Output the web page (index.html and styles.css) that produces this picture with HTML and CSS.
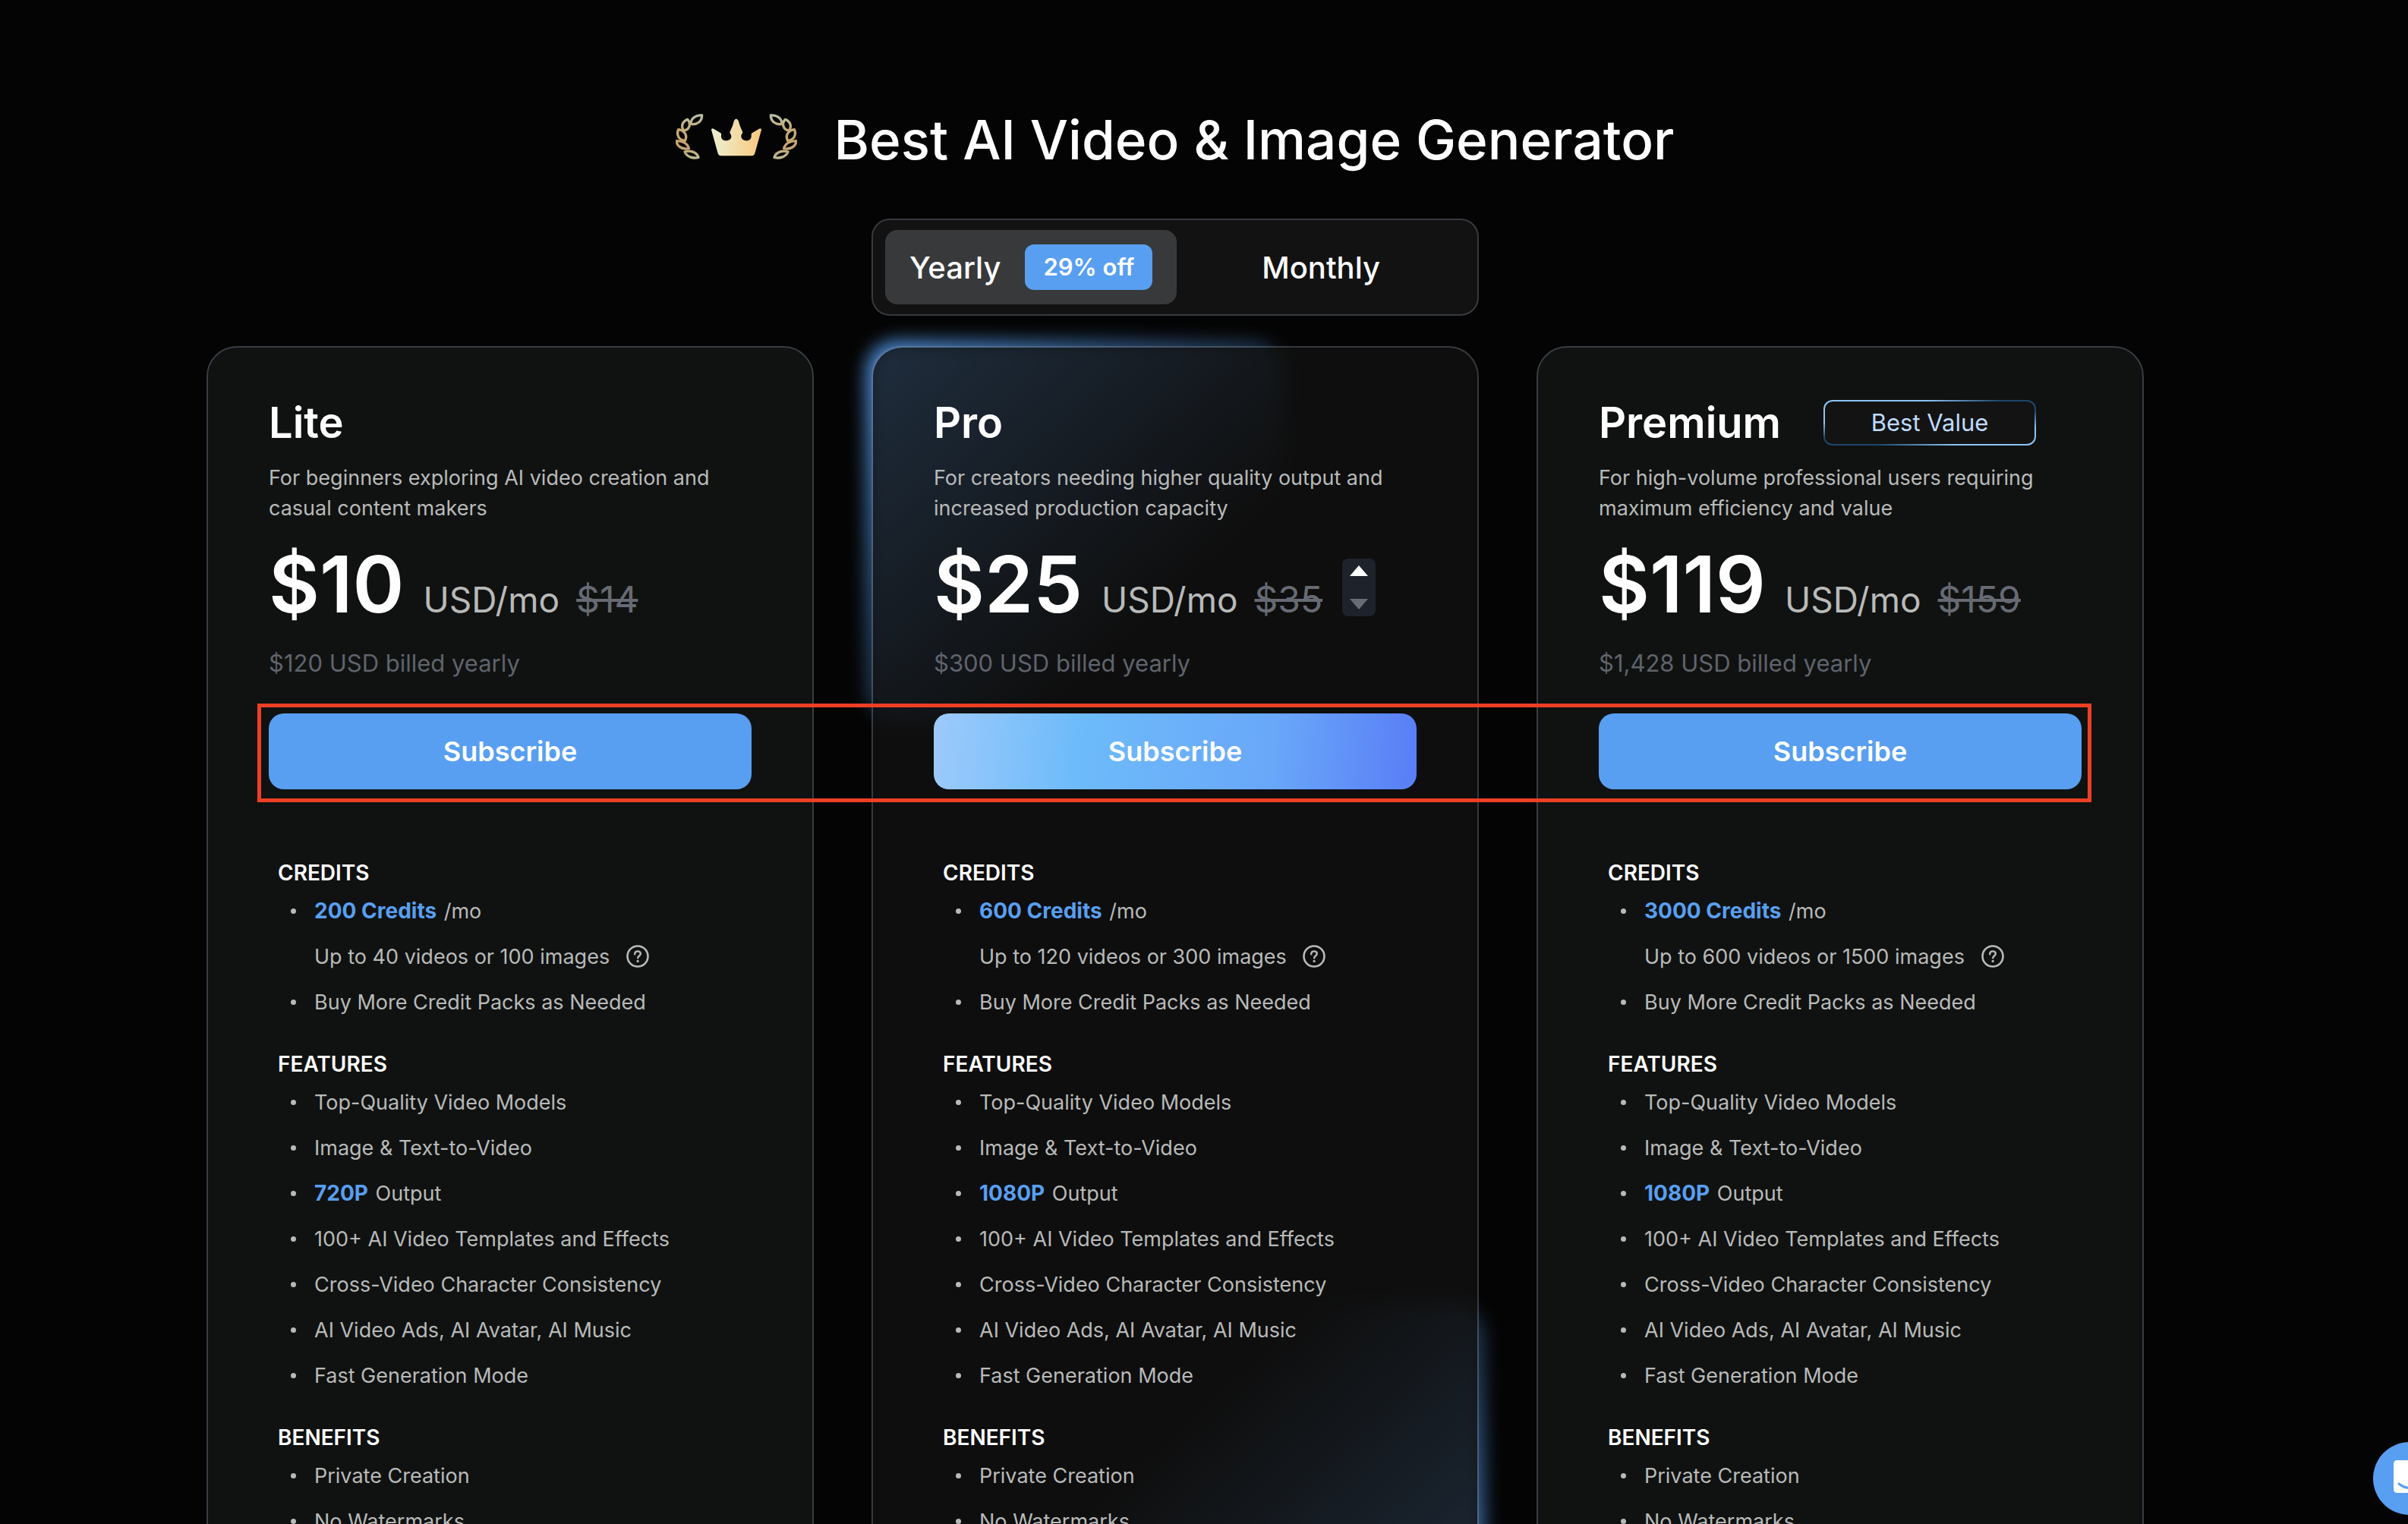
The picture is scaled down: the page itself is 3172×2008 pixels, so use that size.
FILE: index.html
```html
<!DOCTYPE html>
<html lang="en">
<head>
  <meta charset="UTF-8">
  <meta name="viewport" content="width=device-width, initial-scale=1.0">
  <title>Best AI Video &amp; Image Generator</title>
  <link rel="stylesheet" href="styles.css">
</head>
<body>
  <!-- shared icons -->
  <svg class="defs" width="0" height="0" aria-hidden="true">
    <defs>
      <linearGradient id="gold" x1="0" y1="0" x2="1" y2="0">
        <stop offset="0" stop-color="#ebf0d0"/>
        <stop offset="1" stop-color="#fac97e"/>
      </linearGradient>
      <linearGradient id="laurel" gradientUnits="userSpaceOnUse" x1="0" y1="60" x2="0" y2="235">
        <stop offset="0" stop-color="#b9c2aa"/>
        <stop offset="0.3" stop-color="#c4ac7a"/>
        <stop offset="0.7" stop-color="#c9a36b"/>
        <stop offset="1" stop-color="#bdb995"/>
      </linearGradient>
    </defs>
    <symbol id="help" viewBox="0 0 30 30">
      <circle cx="15" cy="15" r="13.5" fill="none" stroke="currentColor" stroke-width="2.6"/>
      <path d="M11.2 12.2C11.2 9.8 12.8 8.4 15 8.4c2.2 0 3.8 1.4 3.8 3.4 0 2.6-3.6 2.9-3.6 5.4" fill="none" stroke="currentColor" stroke-width="2.4" stroke-linecap="round"/>
      <circle cx="15.1" cy="21.4" r="1.6" fill="currentColor"/>
    </symbol>
  </svg>

  <main class="page">
    <header class="hero">
      <svg class="crown" viewBox="90 58 480 180" aria-hidden="true">
        <g id="leaves" fill="none" stroke="url(#laurel)" stroke-width="10" stroke-linejoin="round">
          <path d="M194 64C176 61 150 72 150 98C174 103 194 88 194 64Z"/>
          <path d="M137 80C118 88 109 106 122 124C143 121 154 98 137 80Z"/>
          <path d="M101 120C92 140 102 162 127 164C138 144 126 124 101 120Z"/>
          <path d="M94 165C94 187 117 200 142 195C138 175 117 165 94 165Z"/>
          <path d="M126 208C134 228 158 236 180 230C174 209 147 201 126 208Z"/>
        </g>
        <use href="#leaves" transform="translate(660 0) scale(-1 1)"/>
        <path d="M231 121Q232 114 240 117L268 134Q272 137 270 144C269 158 279 164 290 164C302 164 311 157 310 146Q309 139 305 135Q303 131 306 126Q316 106 321 85Q329 70 338 85Q343 106 353 126Q357 131 353 136Q349 140 349 146C349 157 358 164 369 164C381 164 390 157 389 144Q388 137 392 134L420 117Q429 114 429 121L403 214Q400 224 390 224H270Q260 224 257 214Z" fill="url(#gold)"/>
      </svg>
      <h1 class="hero-title">Best AI Video &amp; Image Generator</h1>
    </header>

    <div class="billing">
      <button class="billing-tab selected" type="button">Yearly <span class="discount">29% off</span></button>
      <button class="billing-tab" type="button">Monthly</button>
    </div>

    <div class="plans">
      <section class="plan">
        <div class="plan-head">
          <h2 class="plan-name">Lite</h2>
        </div>
        <p class="plan-desc">For beginners exploring AI video creation and<br>casual content makers</p>
        <div class="price">
          <span class="amount">$10</span>
          <span class="unit">USD/mo</span>
          <del class="old">$14</del>
        </div>
        <p class="billed">$120 USD billed yearly</p>
        <button class="subscribe" type="button">Subscribe</button>
        <div class="details">
          <h3>CREDITS</h3>
          <ul>
            <li><b>200 Credits</b> /mo</li>
            <li class="plain">Up to 40 videos or 100 images <button class="help" type="button" aria-label="More about credits"><svg><use href="#help"/></svg></button></li>
            <li>Buy More Credit Packs as Needed</li>
          </ul>
          <h3>FEATURES</h3>
          <ul>
            <li>Top-Quality Video Models</li>
            <li>Image &amp; Text-to-Video</li>
            <li><b>720P</b> Output</li>
            <li>100+ AI Video Templates and Effects</li>
            <li>Cross-Video Character Consistency</li>
            <li>AI Video Ads, AI Avatar, AI Music</li>
            <li>Fast Generation Mode</li>
          </ul>
          <h3>BENEFITS</h3>
          <ul>
            <li>Private Creation</li>
            <li>No Watermarks</li>
          </ul>
        </div>
      </section>

      <section class="plan plan-pro">
        <div class="plan-head">
          <h2 class="plan-name">Pro</h2>
        </div>
        <p class="plan-desc">For creators needing higher quality output and<br>increased production capacity</p>
        <div class="price">
          <span class="amount">$25</span>
          <span class="unit">USD/mo</span>
          <del class="old">$35</del>
          <div class="stepper">
            <button type="button" aria-label="Next tier"><svg viewBox="0 0 24 14"><path d="M12 0L24 14H0Z" fill="#fff"/></svg></button>
            <button type="button" aria-label="Previous tier"><svg viewBox="0 0 24 14"><path d="M0 0H24L12 14Z" fill="#686c75"/></svg></button>
          </div>
        </div>
        <p class="billed">$300 USD billed yearly</p>
        <button class="subscribe" type="button">Subscribe</button>
        <div class="details">
          <h3>CREDITS</h3>
          <ul>
            <li><b>600 Credits</b> /mo</li>
            <li class="plain">Up to 120 videos or 300 images <button class="help" type="button" aria-label="More about credits"><svg><use href="#help"/></svg></button></li>
            <li>Buy More Credit Packs as Needed</li>
          </ul>
          <h3>FEATURES</h3>
          <ul>
            <li>Top-Quality Video Models</li>
            <li>Image &amp; Text-to-Video</li>
            <li><b>1080P</b> Output</li>
            <li>100+ AI Video Templates and Effects</li>
            <li>Cross-Video Character Consistency</li>
            <li>AI Video Ads, AI Avatar, AI Music</li>
            <li>Fast Generation Mode</li>
          </ul>
          <h3>BENEFITS</h3>
          <ul>
            <li>Private Creation</li>
            <li>No Watermarks</li>
          </ul>
        </div>
      </section>

      <section class="plan">
        <div class="plan-head">
          <h2 class="plan-name">Premium</h2>
          <span class="best-value">Best Value</span>
        </div>
        <p class="plan-desc">For high-volume professional users requiring<br>maximum efficiency and value</p>
        <div class="price">
          <span class="amount">$119</span>
          <span class="unit">USD/mo</span>
          <del class="old">$159</del>
        </div>
        <p class="billed">$1,428 USD billed yearly</p>
        <button class="subscribe" type="button">Subscribe</button>
        <div class="details">
          <h3>CREDITS</h3>
          <ul>
            <li><b>3000 Credits</b> /mo</li>
            <li class="plain">Up to 600 videos or 1500 images <button class="help" type="button" aria-label="More about credits"><svg><use href="#help"/></svg></button></li>
            <li>Buy More Credit Packs as Needed</li>
          </ul>
          <h3>FEATURES</h3>
          <ul>
            <li>Top-Quality Video Models</li>
            <li>Image &amp; Text-to-Video</li>
            <li><b>1080P</b> Output</li>
            <li>100+ AI Video Templates and Effects</li>
            <li>Cross-Video Character Consistency</li>
            <li>AI Video Ads, AI Avatar, AI Music</li>
            <li>Fast Generation Mode</li>
          </ul>
          <h3>BENEFITS</h3>
          <ul>
            <li>Private Creation</li>
            <li>No Watermarks</li>
          </ul>
        </div>
      </section>

      <div class="highlight"></div>
    </div>
  </main>

  <button class="chat" type="button" aria-label="Open chat">
    <svg viewBox="0 0 96 96"><path d="M32 24H64Q69 24 69 29V74L58 67H32Q27 67 27 62V29Q27 24 32 24Z" fill="#fff"/><path d="M34 55Q48 66 62 55" fill="none" stroke="#589ff1" stroke-width="3" stroke-linecap="round"/></svg>
  </button>
</body>
</html>
```
FILE: styles.css
```css
* {
  box-sizing: border-box;
}

body {
  margin: 0;
  height: 100vh;
  overflow: hidden;
  padding-right: 76px;
  background-color: #040404;
  color: #fff;
  font-family: Inter, 'Liberation Sans', sans-serif;
}

h1, h2, h3, p, ul {
  margin: 0;
  padding: 0;
}

button {
  border: none;
  padding: 0;
  background: none;
  color: inherit;
  font-family: inherit;
  cursor: pointer;
}

.defs {
  position: absolute;
}

.page {
  max-width: 2552px;
  margin: 0 auto;
  padding-top: 136px;
}

.hero {
  display: flex;
  align-items: center;
  justify-content: center;
  gap: 48px;
  height: 96px;
}

.crown {
  width: 160px;
  height: 60px;
  margin-bottom: 8px;
}

.hero-title {
  font-size: 71px;
  font-weight: 500;
  line-height: 96px;
}

/* yearly / monthly switch */
.billing {
  display: flex;
  width: 800px;
  height: 128px;
  margin: 56px auto 40px;
  padding: 13px 16px;
  border: 2px solid #363a3f;
  border-radius: 24px;
  background-color: #121212;
}

.billing-tab {
  display: flex;
  flex: 1;
  align-items: center;
  justify-content: center;
  gap: 32px;
  border-radius: 16px;
  font-size: 40px;
  font-weight: 500;
}

.billing-tab.selected {
  flex: none;
  padding: 0 32px;
  background-color: #38393b;
}

.discount {
  padding: 0 24px;
  border-radius: 12px;
  background-color: #589ff1;
  font-size: 31px;
  font-weight: 600;
  line-height: 60px;
}

/* plan cards */
.plans {
  position: relative;
  z-index: 0;
  display: grid;
  grid-template-columns: repeat(3, 1fr);
  gap: 76px;
}

.plan {
  position: relative;
  padding: 69px 80px 144px;
  border: 2px solid #383c42;
  border-radius: 40px;
  background-color: #101211;
}

.plan-pro {
  border-color: rgba(130, 138, 150, 0.4);
  background-color: rgba(18, 18, 18, 0.8);
  background-clip: padding-box;
}

/* blurred corner glows behind the Pro card */
.plan-pro::before,
.plan-pro::after {
  content: '';
  position: absolute;
  z-index: -1;
  width: 69%;
  height: 500px;
  border-radius: 40px;
  filter: blur(12px);
}

.plan-pro::before {
  top: -8px;
  left: -8px;
  background: linear-gradient(to bottom right, #589ff1, transparent 70%);
}

.plan-pro::after {
  right: -8px;
  bottom: -8px;
  background: linear-gradient(to top left, #589ff1, transparent 70%);
}

.plan-head {
  display: flex;
  align-items: center;
  gap: 56px;
}

.plan-name {
  font-size: 56px;
  font-weight: 600;
  line-height: 60px;
}

.best-value {
  width: 280px;
  border: 2px solid transparent;
  border-radius: 12px;
  background:
    linear-gradient(#131313, #131313) padding-box,
    linear-gradient(to bottom right, #8cc4f8 25%, #1e4668 42%, #1e4668 62%, #8cc4f8 80%) border-box;
  color: #bfdbfe;
  font-size: 31px;
  line-height: 56px;
  text-align: center;
}

.plan-desc {
  margin-top: 23px;
  color: #b8bab9;
  font-size: 27px;
  line-height: 40px;
}

.price {
  display: flex;
  align-items: baseline;
  margin-top: 28px;
}

.amount {
  font-size: 103px;
  font-weight: 600;
  line-height: 104px;
}

.unit {
  margin-left: 25px;
  color: #b8bab9;
  font-size: 46px;
}

.old {
  margin-left: 22px;
  color: #666a73;
  font-size: 48px;
}

.stepper {
  display: flex;
  flex-direction: column;
  align-self: flex-end;
  justify-content: space-between;
  width: 44px;
  height: 76px;
  margin: 0 0 10px 26px;
  padding: 9px 10px;
  border-radius: 8px;
  background-color: #1e222a;
}

.stepper button,
.stepper svg {
  display: block;
  width: 24px;
  height: 14px;
}

.billed {
  margin-top: 32px;
  color: #5f636c;
  font-size: 31px;
  line-height: 40px;
}

.subscribe {
  display: block;
  width: 100%;
  height: 100px;
  margin-top: 46px;
  border-radius: 20px;
  background-color: #589ff1;
  font-size: 36px;
  font-weight: 600;
}

.plan-pro .subscribe {
  background: linear-gradient(95deg, #9dcafb, #6dbbfa 30%, #69a7f9 70%, #5a80f6 98%);
}

.details {
  margin-top: 90px;
  padding-left: 12px;
  font-size: 27px;
}

.details h3 {
  font-size: 28px;
  font-weight: 600;
  line-height: 40px;
}

.details ul {
  margin-bottom: 32px;
  list-style: none;
}

.details li {
  display: flex;
  align-items: center;
  height: 60px;
  color: #b8bab9;
  white-space: pre;
}

.details li::before {
  content: '';
  width: 7px;
  height: 7px;
  margin: 0 24px 0 17px;
  border-radius: 50%;
  background-color: #b8bab9;
}

.details li.plain::before {
  visibility: hidden;
}

.details b {
  margin-right: 2px;
  color: #589ff1;
  font-size: 28px;
  font-weight: 700;
}

.help {
  margin-left: 14px;
}

.help svg {
  display: block;
  width: 30px;
  height: 30px;
}

/* frame around the subscribe buttons */
.highlight {
  position: absolute;
  top: 471px;
  left: 67px;
  right: 69px;
  height: 130px;
  border: 5px solid #ee3f24;
  pointer-events: none;
}

.chat {
  position: fixed;
  right: -50px;
  bottom: 12px;
  width: 96px;
  height: 96px;
  border-radius: 50%;
  background-color: #589ff1;
}

.chat svg {
  display: block;
}
```
